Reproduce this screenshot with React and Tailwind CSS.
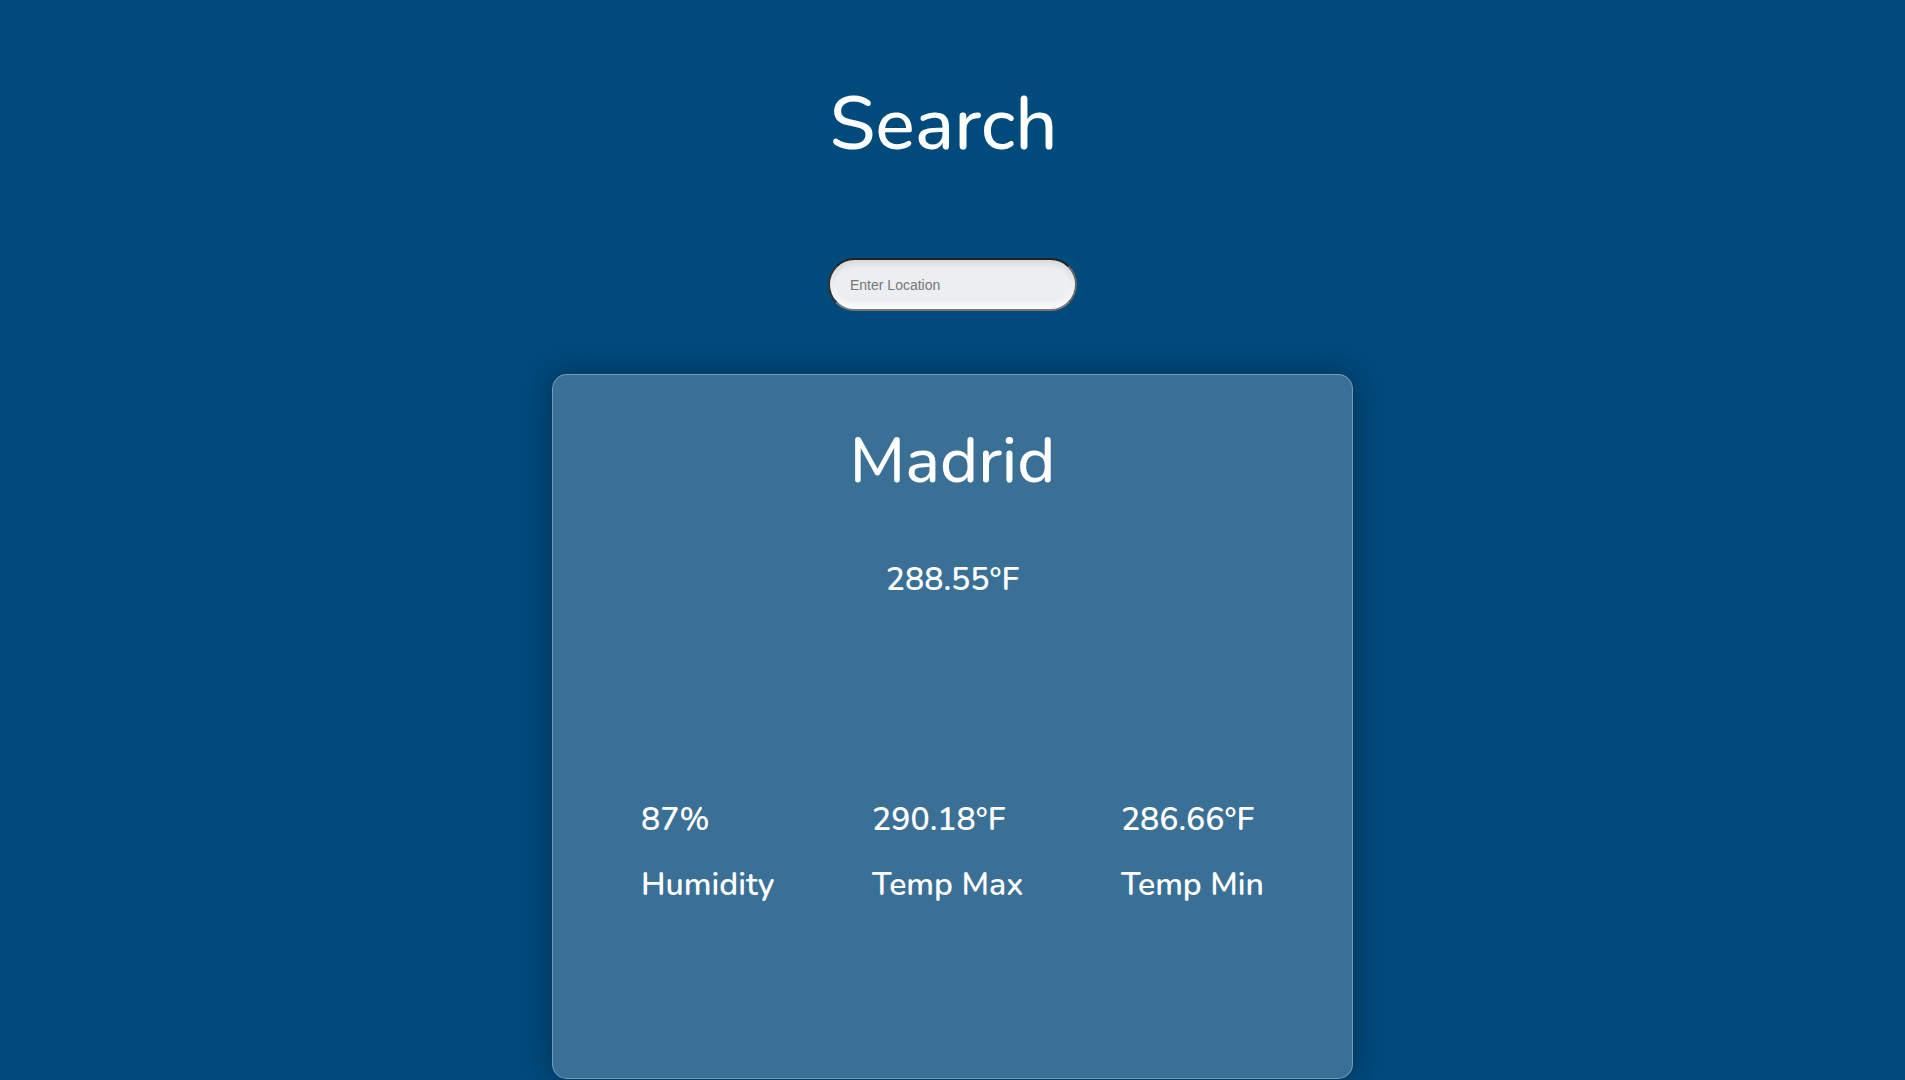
import React from "react";

const font = { fontFamily: '"Nunito", "Lato", "Open Sans", sans-serif' };

function Stat({ value, label }) {
  return (
    <div className="flex flex-col">
      <span className="text-[32px] leading-[38px] font-semibold">{value}</span>
      <span className="mt-[27px] text-[32px] leading-[38px] font-semibold">{label}</span>
    </div>
  );
}

export default function App() {
  return (
    <div
      className="min-h-screen bg-[#004a7c] text-white flex flex-col items-center overflow-hidden"
      style={font}
    >
      <h1 className="mt-[89px] pr-[18px] text-[74px] leading-[72px] font-medium">Search</h1>

      <input
        type="text"
        placeholder="Enter Location"
        className="mt-[97px] w-[249px] h-[53px] rounded-full bg-[#eceff1] border-2 border-t-[#222] border-l-[#333] border-b-[#777] border-r-[#666] pl-[20px] text-[14px] text-gray-700 placeholder:text-[#777] outline-none shadow-[inset_0_-4px_6px_rgba(255,255,255,0.9),inset_0_3px_6px_rgba(0,0,0,0.12)]"
        style={{ fontFamily: '"Liberation Sans", Arial, sans-serif' }}
      />

      <div className="mt-[63px] w-[801px] h-[705px] rounded-[15px] border border-white/30 bg-[#3a7096] shadow-[0_0_30px_rgba(0,0,0,0.35)] flex flex-col items-center">
        <h2 className="mt-[50px] text-[65px] leading-[72px] font-medium">Madrid</h2>
        <p className="mt-[64px] text-[32px] leading-[38px] font-semibold">288.55°F</p>
        <div className="self-stretch mt-[202px] px-[88px] flex justify-between">
          <Stat value="87%" label="Humidity" />
          <Stat value="290.18°F" label="Temp Max" />
          <Stat value="286.66°F" label="Temp Min" />
        </div>
      </div>
    </div>
  );
}
